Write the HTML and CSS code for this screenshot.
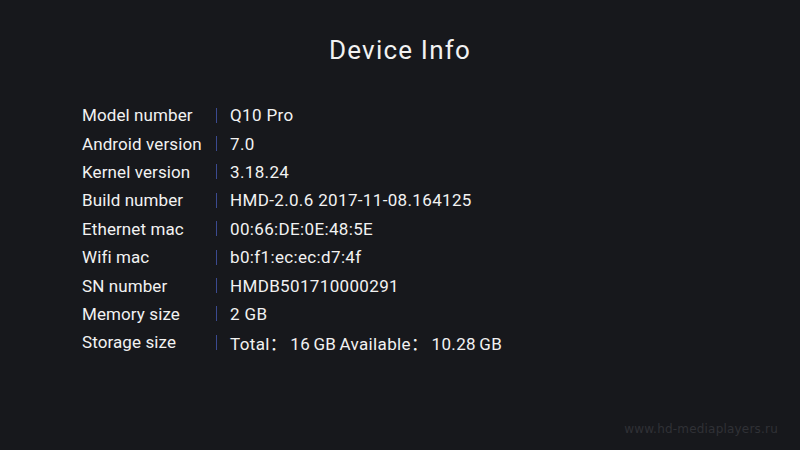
FILE: index.html
```html
<!DOCTYPE html>
<html>
<head>
<meta charset="utf-8">
<link rel="stylesheet" href="styles.css">
</head>
<body>
<div class="screen">
  <h1 class="title">Device Info</h1>
  <div class="info">
    <div class="row"><span class="label">Model number</span><span class="sep"></span><span class="value">Q10 Pro</span></div>
    <div class="row"><span class="label">Android version</span><span class="sep"></span><span class="value">7.0</span></div>
    <div class="row"><span class="label">Kernel version</span><span class="sep"></span><span class="value">3.18.24</span></div>
    <div class="row"><span class="label">Build number</span><span class="sep"></span><span class="value">HMD-2.0.6 2017-11-08.164125</span></div>
    <div class="row"><span class="label">Ethernet mac</span><span class="sep"></span><span class="value">00:66:DE:0E:48:5E</span></div>
    <div class="row"><span class="label">Wifi mac</span><span class="sep"></span><span class="value">b0:f1:ec:ec:d7:4f</span></div>
    <div class="row"><span class="label">SN number</span><span class="sep"></span><span class="value">HMDB501710000291</span></div>
    <div class="row"><span class="label">Memory size</span><span class="sep"></span><span class="value">2 GB</span></div>
    <div class="row"><span class="label">Storage size</span><span class="sep"></span><span class="value storage">Total：&nbsp;16 GB Available：&nbsp;10.28 GB</span></div>
  </div>
  <div class="watermark">www.hd-mediaplayers.ru</div>
</div>
</body>
</html>
```
FILE: styles.css
```css
html, body {
  margin: 0;
  padding: 0;
  background: #17181c;
}
.screen {
  position: relative;
  width: 800px;
  height: 450px;
  background: #17181c;
  font-family: Roboto, "Noto Sans CJK SC", sans-serif;
  color: #f2f2f2;
  overflow: hidden;
}
.title {
  margin: 0;
  padding-top: 33px;
  text-align: center;
  font-size: 26px;
  font-weight: 400;
  line-height: 34px;
  letter-spacing: 1.2px;
}
.info {
  margin-top: 34px;
  padding-left: 82px;
  display: flex;
  flex-direction: column;
}
.row {
  display: flex;
  align-items: center;
  height: 28.4px;
  font-size: 17px;
}
.label {
  width: 134px;
  letter-spacing: 0.1px;
}
.sep {
  width: 1px;
  height: 15px;
  background: #3b4a90;
}
.value {
  margin-left: 13px;
  letter-spacing: 0.35px;
}
.storage {
  word-spacing: -1.3px;
}
.watermark {
  position: absolute;
  right: 22px;
  bottom: 14px;
  font-family: "DejaVu Sans", sans-serif;
  font-size: 12px;
  color: #303136;
  letter-spacing: 0.2px;
}
```
